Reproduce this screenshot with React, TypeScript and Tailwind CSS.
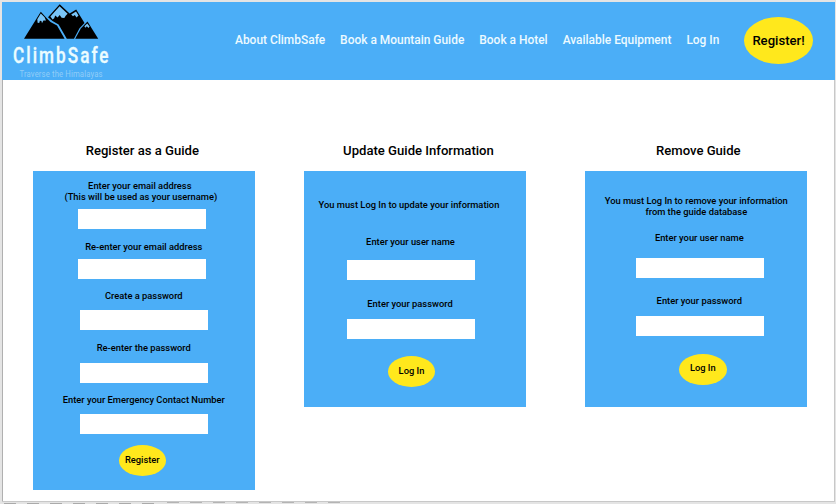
import type { ReactNode } from "react";

function Logo() {
  return (
    <svg width="120" height="78" viewBox="2 2 120 78" className="block shrink-0">
      <path d="M24 38.8L40.8 11.8L46.5 18L50.5 22L57 25.5L64.6 38.8Z" fill="#000" />
      <path d="M48 17.2L59.7 4.2L69.6 13.6L76.2 9.6L84.5 23L79.5 28.2L74 38.8H66.8L58.6 24.5L52.5 21Z" fill="#000" />
      <path d="M75.2 38.8L80.8 28.6L87.5 21.6L98.2 38.8Z" fill="#000" />
      <g fill="#79c5f8">
        <path d="M40.8 13.6L37.3 19.3L37.6 22.8L39.2 23L39.9 20.7L41.4 21L42 23.2L43.4 20.4L46 20.6L44.6 17.2Z" />
        <path d="M59.6 6.2L50.4 16.4L52.6 19.4L54.2 18.2L55.2 15.6L57.6 17.6L59.7 15L61.6 17.8L64.3 18.1L65.7 15.8L67.6 13.8Z" />
        <path d="M76 11.4L71.2 14.6L73 16.2L74.8 15L76.5 17.6L78.5 15.6Z" />
        <path d="M87.2 23.4L84.4 26.3L85.4 27.8L86.8 26.3L88.5 27.9L89.6 26.6Z" />
      </g>
      <text transform="translate(13 63) scale(.78 1)" textLength="122.5" fontFamily="Roboto, sans-serif" fontSize="22" fontWeight="500" fill="#ecfcff" stroke="#ecfcff" strokeWidth=".35">ClimbSafe</text>
      <text transform="translate(19.5 76.8) scale(.83 1)" textLength="100" fontFamily="Roboto, sans-serif" fontSize="9.3" fontWeight="400" fill="#91cdf7">Traverse the Himalayas</text>
    </svg>
  );
}

function Label({ className, children }: { className: string; children: ReactNode }) {
  return <div className={`h-[11px] shrink-0 whitespace-nowrap text-[9.33px] leading-[11px] ${className}`}>{children}</div>;
}

function Field({ className }: { className: string }) {
  return <input className={`block h-5 w-32 shrink-0 bg-white outline-none ${className}`} />;
}

function Oval({ className, children }: { className: string; children: ReactNode }) {
  return (
    <button className={`flex h-[31px] w-[47.5px] shrink-0 items-center justify-center rounded-[50%] bg-[#ffe81c] pb-[3px] text-[9.33px] leading-[11px] font-medium ${className}`}>
      {children}
    </button>
  );
}

function Card({ title, titleClass, className, children }: { title: string; titleClass: string; className: string; children: ReactNode }) {
  return (
    <section className="flex w-[222px] shrink-0 flex-col items-center">
      <h2 className={`h-5 whitespace-nowrap text-[13.1px] leading-5 font-medium ${titleClass}`}>{title}</h2>
      <div className={`mt-[9.7px] flex w-full flex-col items-center bg-[#4baef7] ${className}`}>{children}</div>
    </section>
  );
}

export default function App() {
  return (
    <div className="h-[504px] w-[836px] overflow-hidden bg-[#e4e4e4] pt-0.5 pl-0.5 font-['Roboto',sans-serif] font-medium text-black">
      <div className="h-[500px] w-[833px] border-r border-b border-[#c8c8c8] bg-white">
        <header className="flex h-[78px] w-[833px] items-center bg-[#4baef7]">
          <Logo />
          <nav className="-mt-0.5 ml-[113px] flex gap-[15px] whitespace-nowrap text-[11.95px] leading-4 text-[#edfaff]">
            <a>About ClimbSafe</a>
            <a>Book a Mountain Guide</a>
            <a>Book a Hotel</a>
            <a>Available Equipment</a>
            <a>Log In</a>
          </nav>
          <button className="-mt-px mr-[22px] ml-auto flex h-[47px] w-[69px] items-center justify-center rounded-[50%] bg-[#ffe81c] text-[13.1px] font-medium">
            Register!
          </button>
        </header>
        <main className="flex h-[421px] items-start border-l border-[#b0b0b0] pt-[61px] pl-[29.8px]">
          <Card title="Register as a Guide" titleClass="-ml-[3px]" className="h-[319px] pt-[9.8px]">
            <Label className="-ml-2">Enter your email address</Label>
            <Label className="-ml-[6px]">(This will be used as your username)</Label>
            <Field className="-ml-1 mt-[7px]" />
            <Label className="mt-[11.4px]">Re-enter your email address</Label>
            <Field className="-ml-1 mt-[7.1px]" />
            <Label className="mt-[11px]">Create a password</Label>
            <Field className="mt-[9px]" />
            <Label className="mt-3">Re-enter the password</Label>
            <Field className="mt-[10px]" />
            <Label className="mt-[11px]">Enter your Emergency Contact Number</Label>
            <Field className="mt-[8.8px]" />
            <Oval className="-ml-[3px] mt-[11.7px]">Register</Oval>
          </Card>
          <div className="w-[49.2px] shrink-0" />
          <Card title="Update Guide Information" titleClass="ml-[7px]" className="h-[236px] pt-[28.7px]">
            <Label className="-ml-[12px]">You must Log In to update your information</Label>
            <Label className="-ml-[9px] mt-[26px]">Enter your user name</Label>
            <Field className="-ml-2 mt-[13px]" />
            <Label className="-ml-[10px] mt-[18px]">Enter your password</Label>
            <Field className="-ml-2 mt-[10px]" />
            <Oval className="-ml-[7px] mt-[17px]">Log In</Oval>
          </Card>
          <div className="w-[58.8px] shrink-0" />
          <Card title="Remove Guide" titleClass="ml-[5px]" className="h-[236px] pt-[24.6px]">
            <Label className="ml-px">You must Log In to remove your information</Label>
            <Label className="ml-px">from the guide database</Label>
            <Label className="ml-[7px] mt-[14.4px]">Enter your user name</Label>
            <Field className="ml-2 mt-[15.2px]" />
            <Label className="ml-[7px] mt-[17.6px]">Enter your password</Label>
            <Field className="ml-2 mt-[10px]" />
            <Oval className="ml-[14px] mt-[17.3px]">Log In</Oval>
          </Card>
        </main>
      </div>
      <svg width="420" height="2" className="block">
        <path d="M2 1.5H160" stroke="#aaa" strokeDasharray="12 11" />
        <path d="M165 .5H345" stroke="#b4b4b4" strokeDasharray="12 11" />
      </svg>
    </div>
  );
}
